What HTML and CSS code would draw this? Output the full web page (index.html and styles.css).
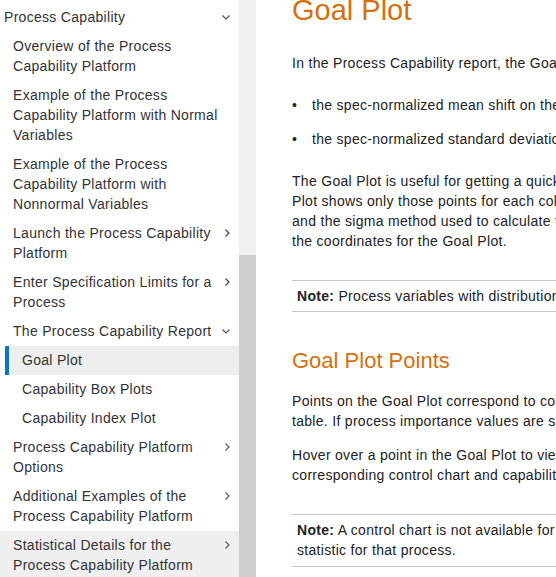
FILE: index.html
```html
<!DOCTYPE html>
<html lang="en">
<head>
<meta charset="utf-8">
<title>Goal Plot</title>
<link rel="stylesheet" href="styles.css">
</head>
<body>
<div class="page">
  <nav class="toc">
    <div class="toc-item toc-item--top">
      <span class="toc-text">Process Capability</span>
      <span class="toc-icon"><svg width="8" height="5" viewBox="0 0 8 5"><path d="M0.5 0.5 L4 4 L7.5 0.5" fill="none" stroke="#555" stroke-width="1.2"/></svg></span>
    </div>
    <div class="toc-item">
      <span class="toc-text">Overview of the Process Capability Platform</span>
      <span class="toc-icon"></span>
    </div>
    <div class="toc-item">
      <span class="toc-text">Example of the Process Capability Platform with Normal Variables</span>
      <span class="toc-icon"></span>
    </div>
    <div class="toc-item">
      <span class="toc-text">Example of the Process Capability Platform with Nonnormal Variables</span>
      <span class="toc-icon"></span>
    </div>
    <div class="toc-item">
      <span class="toc-text">Launch the Process Capability Platform</span>
      <span class="toc-icon"><svg width="5" height="8" viewBox="0 0 5 8"><path d="M0.5 0.5 L4 4 L0.5 7.5" fill="none" stroke="#444" stroke-width="1.2"/></svg></span>
    </div>
    <div class="toc-item">
      <span class="toc-text">Enter Specification Limits for a Process</span>
      <span class="toc-icon"><svg width="5" height="8" viewBox="0 0 5 8"><path d="M0.5 0.5 L4 4 L0.5 7.5" fill="none" stroke="#444" stroke-width="1.2"/></svg></span>
    </div>
    <div class="toc-item">
      <span class="toc-text">The Process Capability Report</span>
      <span class="toc-icon"><svg width="8" height="5" viewBox="0 0 8 5"><path d="M0.5 0.5 L4 4 L7.5 0.5" fill="none" stroke="#555" stroke-width="1.2"/></svg></span>
    </div>
    <div class="toc-item toc-item--sub toc-item--active">
      <span class="toc-text">Goal Plot</span>
      <span class="toc-icon"></span>
    </div>
    <div class="toc-item toc-item--sub">
      <span class="toc-text">Capability Box Plots</span>
      <span class="toc-icon"></span>
    </div>
    <div class="toc-item toc-item--sub">
      <span class="toc-text">Capability Index Plot</span>
      <span class="toc-icon"></span>
    </div>
    <div class="toc-item">
      <span class="toc-text">Process Capability Platform Options</span>
      <span class="toc-icon"><svg width="5" height="8" viewBox="0 0 5 8"><path d="M0.5 0.5 L4 4 L0.5 7.5" fill="none" stroke="#555" stroke-width="1.1"/></svg></span>
    </div>
    <div class="toc-item">
      <span class="toc-text">Additional Examples of the Process Capability Platform</span>
      <span class="toc-icon"><svg width="5" height="8" viewBox="0 0 5 8"><path d="M0.5 0.5 L4 4 L0.5 7.5" fill="none" stroke="#555" stroke-width="1.1"/></svg></span>
    </div>
    <div class="toc-item toc-item--hover">
      <span class="toc-text">Statistical Details for the Process Capability Platform</span>
      <span class="toc-icon"><svg width="5" height="8" viewBox="0 0 5 8"><path d="M0.5 0.5 L4 4 L0.5 7.5" fill="none" stroke="#555" stroke-width="1.1"/></svg></span>
    </div>
  </nav>

  <div class="scrollbar">
    <div class="scrollbar-gap"></div>
    <div class="scrollbar-thumb"></div>
  </div>

  <main class="content">
    <h1 class="title">Goal Plot</h1>
    <p class="para para--first">In the Process Capability report, the Goal Plot shows the following for each process variable:</p>
    <ul class="bullets">
      <li class="bullet">the spec-normalized mean shift on the horizontal axis</li>
      <li class="bullet">the spec-normalized standard deviation on the vertical axis</li>
    </ul>
    <p class="para para--after-list">The Goal Plot is useful for getting a quick, comprehensive view of the capability of your processes. The Goal<br>Plot shows only those points for each column that have both specification limits. The process variable<br>and the sigma method used to calculate the process standard deviation are used to compute<br>the coordinates for the Goal Plot.</p>
    <div class="note"><b>Note:</b> Process variables with distributions other than normal are transformed before they are plotted.</div>

    <h2 class="subtitle">Goal Plot Points</h2>
    <p class="para para--after-h2">Points on the Goal Plot correspond to columns in the Capability Index Summary report<br>table. If process importance values are specified, the points are sized by importance.</p>
    <p class="para">Hover over a point in the Goal Plot to view a thumbnail of the<br>corresponding control chart and capability analysis for that process.</p>
    <div class="note note--last"><b>Note:</b> A control chart is not available for processes that use a historical sigma<br>statistic for that process.</div>
  </main>
</div>
</body>
</html>
```
FILE: styles.css
```css
html, body {
  margin: 0;
  padding: 0;
  overflow: hidden;
  background: #ffffff;
}

body {
  font-family: "Liberation Sans", Arial, sans-serif;
  font-size: 14px;
  letter-spacing: 0.3px;
}

.page {
  display: flex;
  align-items: flex-start;
  height: 577px;
}

/* ---------- sidebar ---------- */
.toc {
  width: 239px;
  flex: none;
  padding-top: 3px;
  color: #333333;
}

.toc-item {
  display: flex;
  align-items: flex-start;
  padding: 4px 9px 5px 13px;
  line-height: 20px;
}

.toc-item--top {
  padding-left: 4px;
}

.toc-item--sub {
  padding-left: 22px;
}

.toc-item--active {
  margin-left: 5px;
  padding-left: 13px;
  border-left: 4px solid #0b76c0;
  background: #eeeeee;
}

.toc-item--hover {
  background: #efefef;
}

.toc-text {
  flex: 1;
}

.toc-icon {
  flex: none;
  width: 10px;
  height: 20px;
  display: flex;
  align-items: center;
  justify-content: flex-end;
}

.toc-icon svg {
  display: block;
}

/* ---------- scrollbar ---------- */
.scrollbar {
  width: 17px;
  flex: none;
  align-self: stretch;
  display: flex;
  flex-direction: column;
  background: #f0f0f0;
}

.scrollbar-gap {
  height: 255px;
  flex: none;
}

.scrollbar-thumb {
  flex: 1;
  background: #cdcdcd;
}

/* ---------- content ---------- */
.content {
  flex: none;
  width: 820px;
  padding-left: 36px;
  display: flex;
  flex-direction: column;
  color: #222222;
  white-space: nowrap;
}

.title {
  margin: -7px 0 0;
  font-size: 29px;
  line-height: 34px;
  font-weight: normal;
  letter-spacing: 0;
  color: #d4700d;
}

.subtitle {
  margin: 36px 0 0;
  font-size: 22px;
  line-height: 26px;
  font-weight: normal;
  letter-spacing: 0;
  color: #d4700d;
}

.para {
  margin: 14px 0 0;
  line-height: 20px;
}

.para--first {
  margin-top: 26px;
}

.para--after-list {
  margin-top: 22px;
}

.para--after-h2 {
  margin-top: 17px;
}

.bullets {
  list-style: none;
  margin: 22px 0 0;
  padding: 0;
  display: flex;
  flex-direction: column;
  gap: 14px;
}

.bullet {
  display: flex;
  line-height: 20px;
}

.bullet::before {
  content: "\2022";
  width: 20px;
  flex: none;
}

.note {
  margin-top: 29px;
  padding: 5px 0 5px 5px;
  line-height: 20px;
  border-top: 1px solid #c6c6c6;
  border-bottom: 1px solid #c6c6c6;
}

.note--last {
  padding-bottom: 6px;
}
```
